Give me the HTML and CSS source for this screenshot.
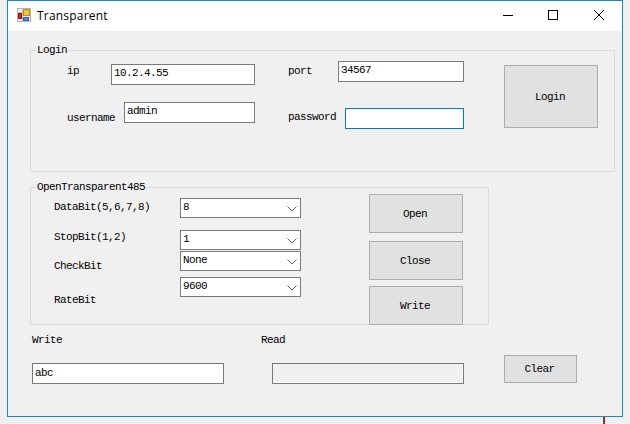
FILE: index.html
```html
<!DOCTYPE html>
<html lang="en">
<head>
    <meta charset="UTF-8">
    <meta name="viewport" content="width=device-width, initial-scale=1.0">
    <title>Transparent</title>
    <link rel="stylesheet" href="styles.css">
</head>
<body>
    <div class="window">
        <div class="titlebar">
            <svg class="app-icon" width="14" height="14" viewBox="0 0 14 14">
                <rect x="0.5" y="0.5" width="13" height="13" fill="#ececec" stroke="#b4b4b4"/>
                <path d="M5.5 0V14M0 4.5H6M0 10.5H6" stroke="#c4c4c4" fill="none"/>
                <rect x="6.5" y="1.5" width="6" height="6" fill="#f3c534" stroke="#b98f1c"/>
                <rect x="1.5" y="5.5" width="3" height="5" fill="#d8261c" stroke="#8e1710"/>
                <rect x="6.5" y="9.5" width="5" height="3" fill="#4a8fe0" stroke="#2b65ad"/>
            </svg>
            <span class="title">Transparent</span>
            <div class="controls">
                <svg width="10" height="10" viewBox="0 0 10 10"><path d="M0 5.5H10" stroke="#000"/></svg>
                <svg class="maximize" width="10" height="10" viewBox="0 0 10 10"><rect x="0.5" y="0.5" width="9" height="9" fill="none" stroke="#000"/></svg>
                <svg class="close" width="10" height="10" viewBox="0 0 10 10"><path d="M0 0L10 10M10 0L0 10" stroke="#000" fill="none"/></svg>
            </div>
        </div>

        <div class="client">
            <fieldset class="group login-group">
                <legend>Login</legend>
                <div class="login-col left-col">
                    <div class="field">
                        <label class="lbl-ip">ip</label>
                        <input type="text" class="box ip-box" value="10.2.4.55">
                    </div>
                    <div class="field">
                        <label class="lbl-user">username</label>
                        <input type="text" class="box user-box" value="admin">
                    </div>
                </div>
                <div class="login-col right-col">
                    <div class="field">
                        <label class="lbl-port">port</label>
                        <input type="text" class="box port-box" value="34567">
                    </div>
                    <div class="field">
                        <label class="lbl-pass">password</label>
                        <input type="password" class="box pass-box">
                    </div>
                </div>
                <button class="btn login-btn">Login</button>
            </fieldset>

            <fieldset class="group serial-group">
                <legend>OpenTransparent485</legend>
                <div class="serial-fields">
                    <div class="serial-row row-data">
                        <label>DataBit(5,6,7,8)</label>
                        <div class="combo">
                            <select><option>8</option></select>
                            <svg class="chevron" width="10" height="6" viewBox="0 0 10 6"><path d="M0.5 0.5L5 5L9.5 0.5" fill="none" stroke="#606060"/></svg>
                        </div>
                    </div>
                    <div class="serial-row row-stop">
                        <label>StopBit(1,2)</label>
                        <div class="combo">
                            <select><option>1</option></select>
                            <svg class="chevron" width="10" height="6" viewBox="0 0 10 6"><path d="M0.5 0.5L5 5L9.5 0.5" fill="none" stroke="#606060"/></svg>
                        </div>
                    </div>
                    <div class="serial-row row-check">
                        <label>CheckBit</label>
                        <div class="combo">
                            <select><option>None</option></select>
                            <svg class="chevron" width="10" height="6" viewBox="0 0 10 6"><path d="M0.5 0.5L5 5L9.5 0.5" fill="none" stroke="#606060"/></svg>
                        </div>
                    </div>
                    <div class="serial-row row-rate">
                        <label>RateBit</label>
                        <div class="combo">
                            <select><option>9600</option></select>
                            <svg class="chevron" width="10" height="6" viewBox="0 0 10 6"><path d="M0.5 0.5L5 5L9.5 0.5" fill="none" stroke="#606060"/></svg>
                        </div>
                    </div>
                </div>
                <div class="serial-buttons">
                    <button class="btn">Open</button>
                    <button class="btn">Close</button>
                    <button class="btn">Write</button>
                </div>
            </fieldset>

            <div class="io-row">
                <div class="io-col write-col">
                    <label>Write</label>
                    <input type="text" class="box io-box" value="abc">
                </div>
                <div class="io-col read-col">
                    <label>Read</label>
                    <input type="text" class="box io-box read-box" disabled>
                </div>
                <button class="btn clear-btn">Clear</button>
            </div>
        </div>
    </div>
    <div class="behind-line"></div>
</body>
</html>
```

FILE: styles.css
```css
* {
    margin: 0;
    padding: 0;
    box-sizing: border-box;
}

body {
    font-family: 'Liberation Mono', monospace;
    font-size: 11px;
    letter-spacing: -0.6px;
    color: #000;
    background-color: #f0f0f0;
    width: 630px;
    height: 424px;
    overflow: hidden;
    position: relative;
}

label {
    display: block;
    line-height: 12px;
    white-space: nowrap;
}

.window {
    width: 616px;
    height: 417px;
    margin-left: 7px;
    border: 1px solid #1883d7;
    background-color: #f0f0f0;
}

.titlebar {
    display: flex;
    align-items: center;
    height: 30px;
    padding: 0 0 2px 9px;
    background-color: #fff;
}

.app-icon {
    margin-right: 6px;
}

.title {
    font-family: 'Open Sans', sans-serif;
    font-size: 12px;
    letter-spacing: 0.2px;
}

.controls {
    display: flex;
    align-items: center;
    margin-left: auto;
    margin-right: 18px;
}

.maximize {
    margin-left: 35px;
}

.close {
    margin-left: 36px;
}

.client {
    padding: 13px 0 0 22px;
}

.group {
    border: 1px solid #dcdcdc;
    display: flex;
}

.group legend {
    margin-left: 5px;
    padding: 0 1px;
    line-height: 12px;
}

.box {
    height: 21px;
    border: 1px solid #7a7a7a;
    background-color: #fff;
    padding: 0 2px 3px;
    font: inherit;
    letter-spacing: inherit;
    color: #000;
    outline: none;
}

.btn {
    border: 1px solid #adadad;
    background-color: #e1e1e1;
    padding-right: 2px;
    font: inherit;
    letter-spacing: inherit;
    color: #000;
}

/* login group */
.login-group {
    width: 585px;
    height: 128px;
}

.login-col {
    display: flex;
    flex-direction: column;
}

.left-col {
    width: 188px;
    margin-left: 36px;
    padding-top: 8px;
    gap: 17px;
}

.right-col {
    width: 176px;
    margin-left: 33px;
    padding-top: 5px;
    gap: 26px;
}

.field {
    display: flex;
    justify-content: space-between;
    align-items: flex-start;
}

.lbl-ip {
    margin-top: 1px;
}

.lbl-user {
    margin-top: 10px;
}

.lbl-port {
    margin-top: 4px;
}

.lbl-pass {
    margin-top: 3px;
}

.ip-box {
    width: 144px;
}

.user-box {
    width: 131px;
}

.port-box {
    width: 126px;
}

.pass-box {
    width: 119px;
    border-color: #0078d7;
}

.login-btn {
    width: 94px;
    height: 63px;
    margin: 9px 0 0 40px;
}

/* serial group */
.serial-group {
    width: 459px;
    height: 144px;
    margin-top: 9px;
}

.serial-fields {
    width: 247px;
    margin-left: 23px;
    padding-top: 5px;
}

.serial-row {
    display: flex;
    justify-content: space-between;
    align-items: flex-start;
    height: 20px;
}

.row-data label {
    margin-top: 3px;
}

.row-stop {
    margin-top: 12px;
}

.row-stop label {
    margin-top: 1px;
}

.row-check {
    margin-top: 1px;
}

.row-check label {
    margin-top: 9px;
}

.row-rate {
    margin-top: 6px;
}

.row-rate label {
    margin-top: 17px;
}

.combo {
    position: relative;
    width: 121px;
    height: 20px;
}

.combo select {
    appearance: none;
    width: 100%;
    height: 100%;
    border: 1px solid #7a7a7a;
    border-radius: 0;
    background-color: #fff;
    padding: 0 2px 2px;
    font: inherit;
    letter-spacing: inherit;
    color: #000;
    outline: none;
}

.chevron {
    position: absolute;
    right: 4px;
    top: 8px;
}

.serial-buttons {
    display: flex;
    flex-direction: column;
    width: 94px;
    margin: 1px 0 0 68px;
}

.serial-buttons .btn {
    flex: none;
    height: 39px;
    margin-top: 8px;
}

.serial-buttons .btn:first-child {
    margin-top: 0;
}

.serial-buttons .btn:last-child {
    margin-top: 6px;
}

/* write / read row */
.io-row {
    display: flex;
    align-items: flex-start;
    margin: 8px 0 0 2px;
}

.io-col {
    display: flex;
    flex-direction: column;
}

.io-col label {
    margin-top: 1px;
}

.write-col {
    width: 192px;
}

.read-col {
    width: 203px;
    margin-left: 37px;
}

.io-box {
    width: 192px;
    margin-top: 17px;
    padding-bottom: 1px;
}

.read-box {
    margin-left: 11px;
    background-color: #f0f0f0;
    box-shadow: inset -1px -1px 0 #fafafa;
}

.clear-btn {
    width: 73px;
    height: 28px;
    margin: 22px 0 0 40px;
}

.behind-line {
    position: absolute;
    left: 603px;
    top: 417px;
    width: 2px;
    height: 7px;
    background: linear-gradient(to right, #555 50%, #e00000 50%);
}
```
